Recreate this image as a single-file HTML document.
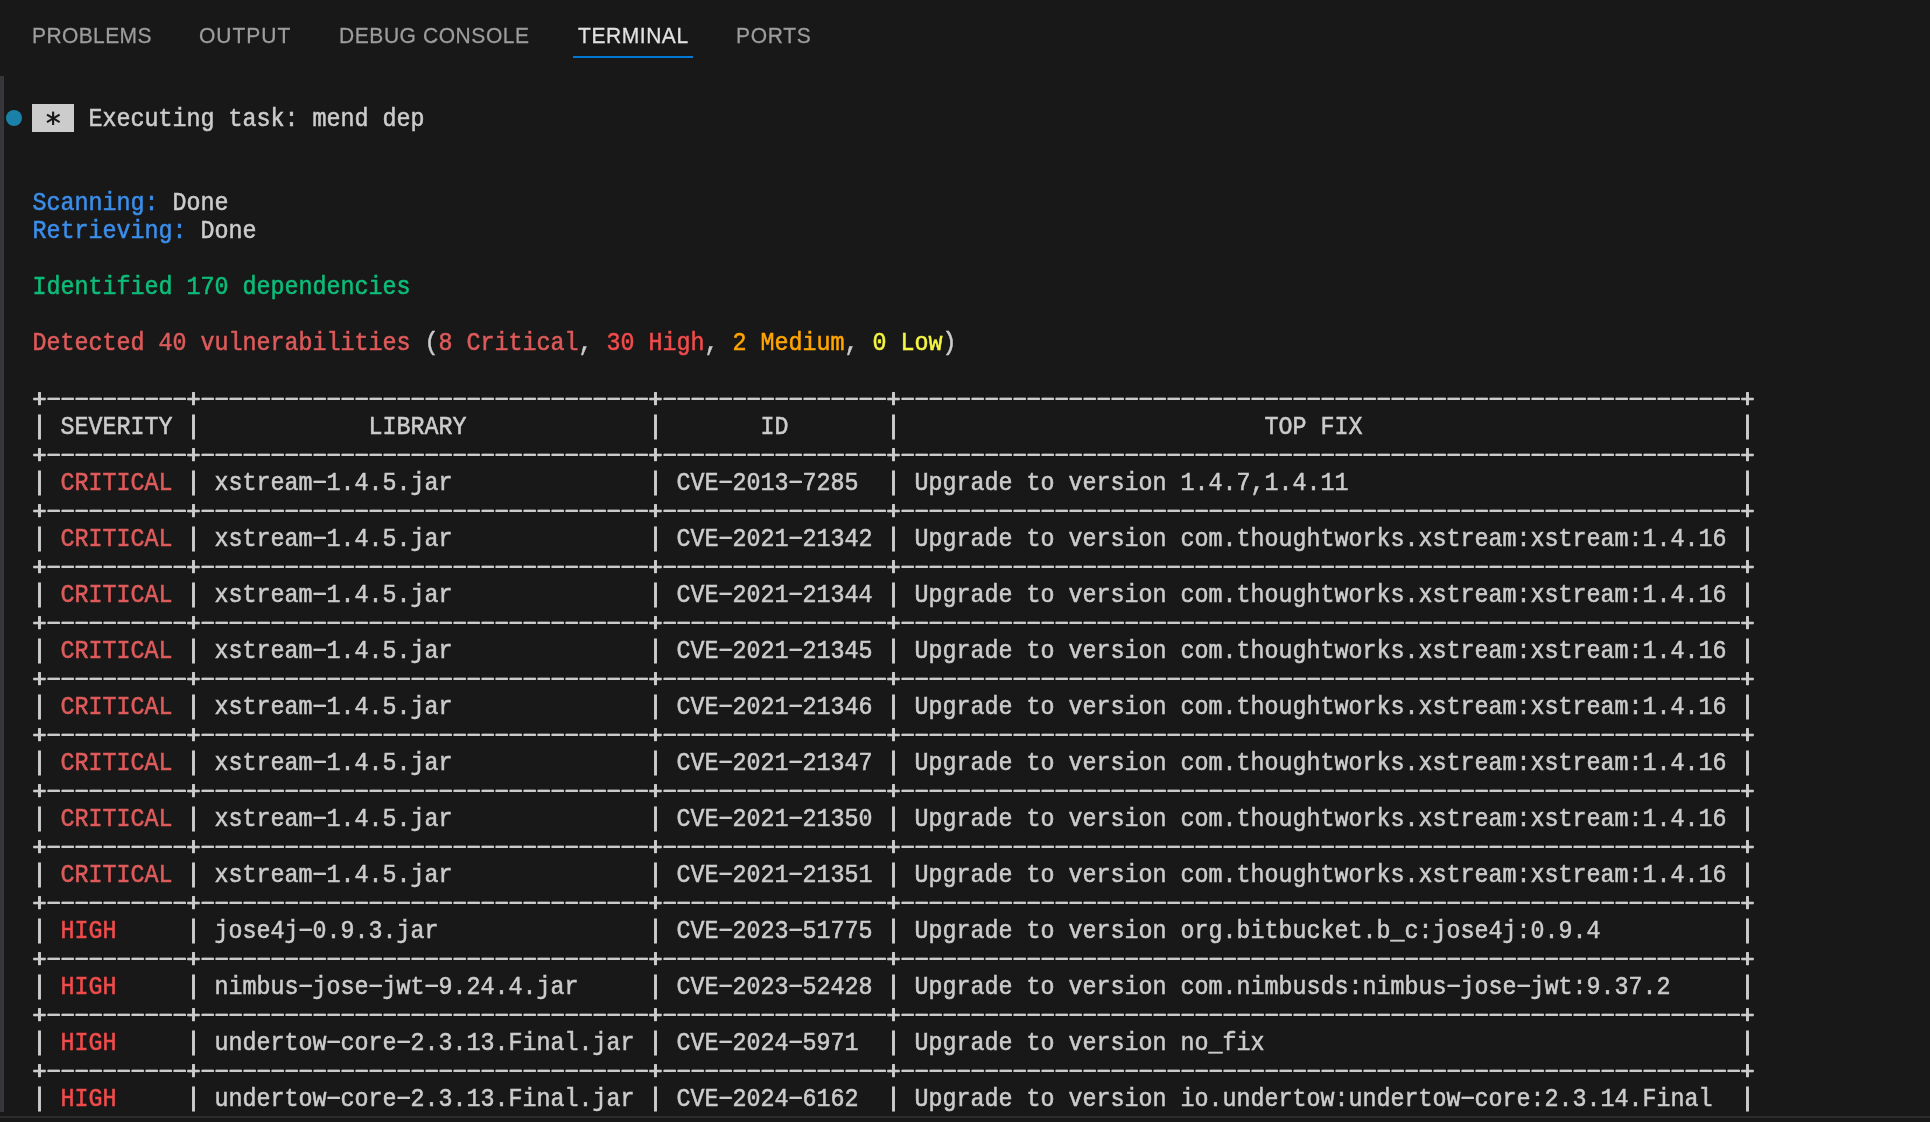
<!DOCTYPE html>
<html lang="en">
<head>
<meta charset="utf-8">
<title>Terminal</title>
<style>
  html, body { margin:0; padding:0; background:#181818; }
  body { width:1930px; height:1122px; position:relative; overflow:hidden;
         font-family:"Liberation Sans", sans-serif; }
  .tabs { position:absolute; left:0; top:0; height:70px; width:1930px; }
  .tab { position:absolute; top:22.5px; font-size:21px; line-height:26px; color:#9d9d9d;
          white-space:nowrap; transform-origin:0 50%; transform:scaleY(1.07); -webkit-text-stroke:0.25px currentColor; will-change:transform; }
  .tab.active { color:#e2e2e2; }
  .uline { position:absolute; left:573px; top:56px; width:120px; height:2px; background:#0078d4; }
  .strip { position:absolute; left:0; top:76px; width:3px; height:1036px; background:#37363b; border-right:1px solid #39383e; }
  .bline { position:absolute; left:0; top:1116px; width:1930px; height:2px; background:#2b2b2b; }
  .dot { position:absolute; left:6px; top:110px; width:16px; height:16px; border-radius:50%; background:#1b81a8; }
  .star { position:absolute; left:32px; top:104px; width:42px; height:28px; background:#cccccc; }
  .star svg { position:absolute; left:0; top:0; }
  .term { position:absolute; left:32px; top:107.0px; width:1890px; height:1020px; margin:0; padding:0;
      font-family:"Liberation Mono", monospace; font-size:23.33px; line-height:24px;
      color:#cccccc;
      -webkit-text-stroke:0.5px currentColor; font-kerning:none; font-variant-ligatures:none; will-change:transform; }
  .l { position:absolute; left:0; height:24px; white-space:pre; transform-origin:0 0; transform:translateX(0.5px) scaleY(1.08); }
  .l i, .l u { font-style:normal; text-decoration:none; -webkit-text-stroke:0.55px currentColor;
          text-shadow:0.55px 0 0 currentColor, -0.55px 0 0 currentColor; }
  .bd { margin-top:0.6px; }
  .l b { font-weight:normal; -webkit-text-stroke:0.95px currentColor; }
  .b { color:#3b8eea; }
  .g { color:#0dbc79; }
  .c { color:#de5b5b; }
  .r { color:#f14c4c; }
  .o { color:#ffa500; }
  .y { color:#f5f543; }
</style>
</head>
<body>
<div class="tabs">
  <div class="tab" style="left:32.0px; letter-spacing:0.4px;">PROBLEMS</div>
  <div class="tab" style="left:199.2px; letter-spacing:1.0px;">OUTPUT</div>
  <div class="tab" style="left:339.4px; letter-spacing:0.57px;">DEBUG CONSOLE</div>
  <div class="tab active" style="left:578.2px; letter-spacing:0.56px;">TERMINAL</div>
  <div class="tab" style="left:735.6px; letter-spacing:0.7px;">PORTS</div>
  <div class="uline"></div>
</div>
<div class="strip"></div>
<div class="bline"></div>
<div class="dot"></div>
<div class="star"><svg width="42" height="28" viewBox="0 0 42 28"><g stroke="#181818" stroke-width="2.1" stroke-linecap="butt" fill="none"><path d="M21.1 7.6V21"/><path d="M15 10.6L27.6 18.1"/><path d="M15 18.1L27.6 10.6"/></g></svg></div>
<div class="term">
<div class="l" style="top:0px">    Executing task: mend dep</div>
<div class="l" style="top:84px"><span class="b">Scanning:</span> Done</div>
<div class="l" style="top:112px"><span class="b">Retrieving:</span> Done</div>
<div class="l" style="top:168px"><span class="g">Identified 170 dependencies</span></div>
<div class="l" style="top:224px"><span class="c">Detected 40 vulnerabilities</span> (<span class="c">8 Critical</span>, <span class="r">30 High</span>, <span class="o">2 Medium</span>, <span class="y">0 Low</span>)</div>
<div class="l bd" style="top:280px"><u>+</u><i>−−−−−−−−−−</i><u>+</u><i>−−−−−−−−−−−−−−−−−−−−−−−−−−−−−−−−</i><u>+</u><i>−−−−−−−−−−−−−−−−</i><u>+</u><i>−−−−−−−−−−−−−−−−−−−−−−−−−−−−−−−−−−−−−−−−−−−−−−−−−−−−−−−−−−−−</i><u>+</u></div>
<div class="l" style="top:308px"><b>|</b> SEVERITY <b>|</b>            LIBRARY             <b>|</b>       ID       <b>|</b>                          TOP FIX                           <b>|</b></div>
<div class="l bd" style="top:336px"><u>+</u><i>−−−−−−−−−−</i><u>+</u><i>−−−−−−−−−−−−−−−−−−−−−−−−−−−−−−−−</i><u>+</u><i>−−−−−−−−−−−−−−−−</i><u>+</u><i>−−−−−−−−−−−−−−−−−−−−−−−−−−−−−−−−−−−−−−−−−−−−−−−−−−−−−−−−−−−−</i><u>+</u></div>
<div class="l" style="top:364px"><b>|</b> <span class="c">CRITICAL</span> <b>|</b> xstream<i>−</i>1.4.5.jar              <b>|</b> CVE<i>−</i>2013<i>−</i>7285  <b>|</b> Upgrade to version 1.4.7,1.4.11                            <b>|</b></div>
<div class="l bd" style="top:392px"><u>+</u><i>−−−−−−−−−−</i><u>+</u><i>−−−−−−−−−−−−−−−−−−−−−−−−−−−−−−−−</i><u>+</u><i>−−−−−−−−−−−−−−−−</i><u>+</u><i>−−−−−−−−−−−−−−−−−−−−−−−−−−−−−−−−−−−−−−−−−−−−−−−−−−−−−−−−−−−−</i><u>+</u></div>
<div class="l" style="top:420px"><b>|</b> <span class="c">CRITICAL</span> <b>|</b> xstream<i>−</i>1.4.5.jar              <b>|</b> CVE<i>−</i>2021<i>−</i>21342 <b>|</b> Upgrade to version com.thoughtworks.xstream:xstream:1.4.16 <b>|</b></div>
<div class="l bd" style="top:448px"><u>+</u><i>−−−−−−−−−−</i><u>+</u><i>−−−−−−−−−−−−−−−−−−−−−−−−−−−−−−−−</i><u>+</u><i>−−−−−−−−−−−−−−−−</i><u>+</u><i>−−−−−−−−−−−−−−−−−−−−−−−−−−−−−−−−−−−−−−−−−−−−−−−−−−−−−−−−−−−−</i><u>+</u></div>
<div class="l" style="top:476px"><b>|</b> <span class="c">CRITICAL</span> <b>|</b> xstream<i>−</i>1.4.5.jar              <b>|</b> CVE<i>−</i>2021<i>−</i>21344 <b>|</b> Upgrade to version com.thoughtworks.xstream:xstream:1.4.16 <b>|</b></div>
<div class="l bd" style="top:504px"><u>+</u><i>−−−−−−−−−−</i><u>+</u><i>−−−−−−−−−−−−−−−−−−−−−−−−−−−−−−−−</i><u>+</u><i>−−−−−−−−−−−−−−−−</i><u>+</u><i>−−−−−−−−−−−−−−−−−−−−−−−−−−−−−−−−−−−−−−−−−−−−−−−−−−−−−−−−−−−−</i><u>+</u></div>
<div class="l" style="top:532px"><b>|</b> <span class="c">CRITICAL</span> <b>|</b> xstream<i>−</i>1.4.5.jar              <b>|</b> CVE<i>−</i>2021<i>−</i>21345 <b>|</b> Upgrade to version com.thoughtworks.xstream:xstream:1.4.16 <b>|</b></div>
<div class="l bd" style="top:560px"><u>+</u><i>−−−−−−−−−−</i><u>+</u><i>−−−−−−−−−−−−−−−−−−−−−−−−−−−−−−−−</i><u>+</u><i>−−−−−−−−−−−−−−−−</i><u>+</u><i>−−−−−−−−−−−−−−−−−−−−−−−−−−−−−−−−−−−−−−−−−−−−−−−−−−−−−−−−−−−−</i><u>+</u></div>
<div class="l" style="top:588px"><b>|</b> <span class="c">CRITICAL</span> <b>|</b> xstream<i>−</i>1.4.5.jar              <b>|</b> CVE<i>−</i>2021<i>−</i>21346 <b>|</b> Upgrade to version com.thoughtworks.xstream:xstream:1.4.16 <b>|</b></div>
<div class="l bd" style="top:616px"><u>+</u><i>−−−−−−−−−−</i><u>+</u><i>−−−−−−−−−−−−−−−−−−−−−−−−−−−−−−−−</i><u>+</u><i>−−−−−−−−−−−−−−−−</i><u>+</u><i>−−−−−−−−−−−−−−−−−−−−−−−−−−−−−−−−−−−−−−−−−−−−−−−−−−−−−−−−−−−−</i><u>+</u></div>
<div class="l" style="top:644px"><b>|</b> <span class="c">CRITICAL</span> <b>|</b> xstream<i>−</i>1.4.5.jar              <b>|</b> CVE<i>−</i>2021<i>−</i>21347 <b>|</b> Upgrade to version com.thoughtworks.xstream:xstream:1.4.16 <b>|</b></div>
<div class="l bd" style="top:672px"><u>+</u><i>−−−−−−−−−−</i><u>+</u><i>−−−−−−−−−−−−−−−−−−−−−−−−−−−−−−−−</i><u>+</u><i>−−−−−−−−−−−−−−−−</i><u>+</u><i>−−−−−−−−−−−−−−−−−−−−−−−−−−−−−−−−−−−−−−−−−−−−−−−−−−−−−−−−−−−−</i><u>+</u></div>
<div class="l" style="top:700px"><b>|</b> <span class="c">CRITICAL</span> <b>|</b> xstream<i>−</i>1.4.5.jar              <b>|</b> CVE<i>−</i>2021<i>−</i>21350 <b>|</b> Upgrade to version com.thoughtworks.xstream:xstream:1.4.16 <b>|</b></div>
<div class="l bd" style="top:728px"><u>+</u><i>−−−−−−−−−−</i><u>+</u><i>−−−−−−−−−−−−−−−−−−−−−−−−−−−−−−−−</i><u>+</u><i>−−−−−−−−−−−−−−−−</i><u>+</u><i>−−−−−−−−−−−−−−−−−−−−−−−−−−−−−−−−−−−−−−−−−−−−−−−−−−−−−−−−−−−−</i><u>+</u></div>
<div class="l" style="top:756px"><b>|</b> <span class="c">CRITICAL</span> <b>|</b> xstream<i>−</i>1.4.5.jar              <b>|</b> CVE<i>−</i>2021<i>−</i>21351 <b>|</b> Upgrade to version com.thoughtworks.xstream:xstream:1.4.16 <b>|</b></div>
<div class="l bd" style="top:784px"><u>+</u><i>−−−−−−−−−−</i><u>+</u><i>−−−−−−−−−−−−−−−−−−−−−−−−−−−−−−−−</i><u>+</u><i>−−−−−−−−−−−−−−−−</i><u>+</u><i>−−−−−−−−−−−−−−−−−−−−−−−−−−−−−−−−−−−−−−−−−−−−−−−−−−−−−−−−−−−−</i><u>+</u></div>
<div class="l" style="top:812px"><b>|</b> <span class="r">HIGH</span>     <b>|</b> jose4j<i>−</i>0.9.3.jar               <b>|</b> CVE<i>−</i>2023<i>−</i>51775 <b>|</b> Upgrade to version org.bitbucket.b_c:jose4j:0.9.4          <b>|</b></div>
<div class="l bd" style="top:840px"><u>+</u><i>−−−−−−−−−−</i><u>+</u><i>−−−−−−−−−−−−−−−−−−−−−−−−−−−−−−−−</i><u>+</u><i>−−−−−−−−−−−−−−−−</i><u>+</u><i>−−−−−−−−−−−−−−−−−−−−−−−−−−−−−−−−−−−−−−−−−−−−−−−−−−−−−−−−−−−−</i><u>+</u></div>
<div class="l" style="top:868px"><b>|</b> <span class="r">HIGH</span>     <b>|</b> nimbus<i>−</i>jose<i>−</i>jwt<i>−</i>9.24.4.jar     <b>|</b> CVE<i>−</i>2023<i>−</i>52428 <b>|</b> Upgrade to version com.nimbusds:nimbus<i>−</i>jose<i>−</i>jwt:9.37.2     <b>|</b></div>
<div class="l bd" style="top:896px"><u>+</u><i>−−−−−−−−−−</i><u>+</u><i>−−−−−−−−−−−−−−−−−−−−−−−−−−−−−−−−</i><u>+</u><i>−−−−−−−−−−−−−−−−</i><u>+</u><i>−−−−−−−−−−−−−−−−−−−−−−−−−−−−−−−−−−−−−−−−−−−−−−−−−−−−−−−−−−−−</i><u>+</u></div>
<div class="l" style="top:924px"><b>|</b> <span class="r">HIGH</span>     <b>|</b> undertow<i>−</i>core<i>−</i>2.3.13.Final.jar <b>|</b> CVE<i>−</i>2024<i>−</i>5971  <b>|</b> Upgrade to version no_fix                                  <b>|</b></div>
<div class="l bd" style="top:952px"><u>+</u><i>−−−−−−−−−−</i><u>+</u><i>−−−−−−−−−−−−−−−−−−−−−−−−−−−−−−−−</i><u>+</u><i>−−−−−−−−−−−−−−−−</i><u>+</u><i>−−−−−−−−−−−−−−−−−−−−−−−−−−−−−−−−−−−−−−−−−−−−−−−−−−−−−−−−−−−−</i><u>+</u></div>
<div class="l" style="top:980px"><b>|</b> <span class="r">HIGH</span>     <b>|</b> undertow<i>−</i>core<i>−</i>2.3.13.Final.jar <b>|</b> CVE<i>−</i>2024<i>−</i>6162  <b>|</b> Upgrade to version io.undertow:undertow<i>−</i>core:2.3.14.Final  <b>|</b></div>
</div>
</body>
</html>
